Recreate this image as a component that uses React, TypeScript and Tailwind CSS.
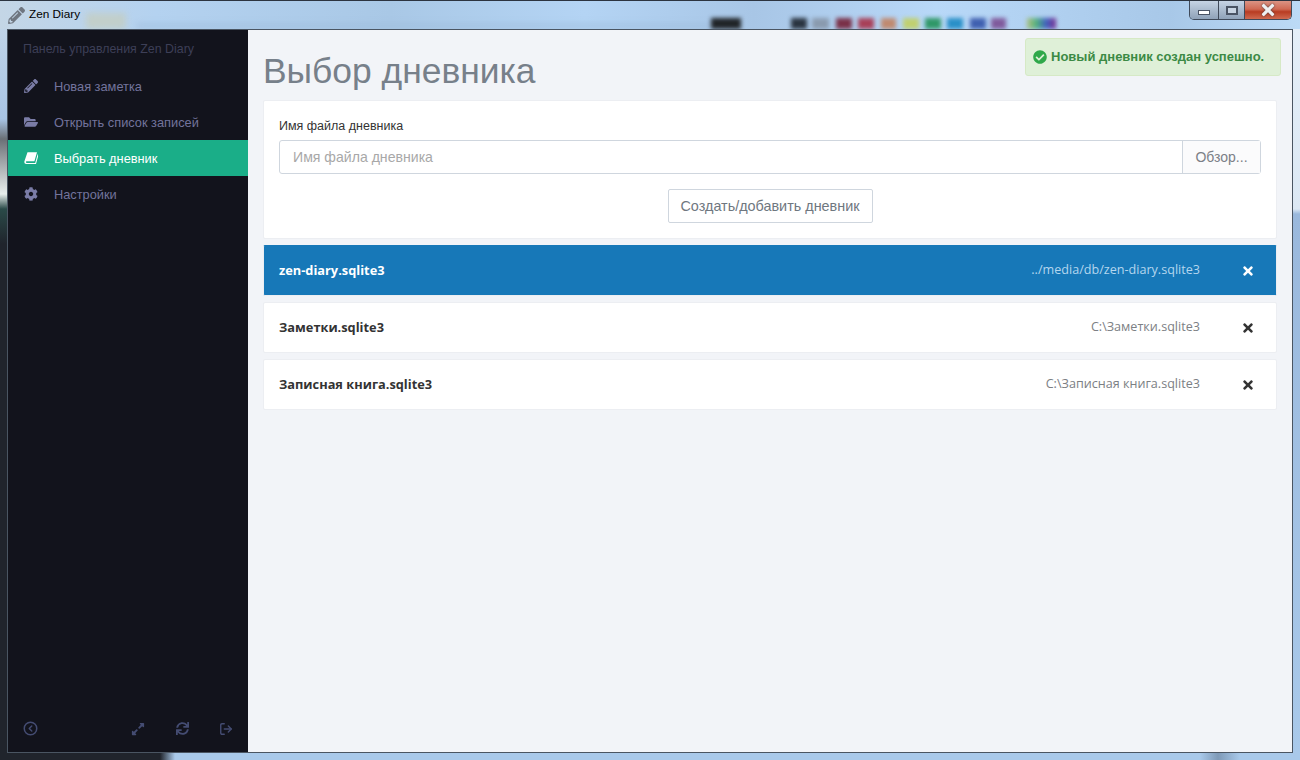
import React from 'react';
import { FaCheckCircle, FaCog, FaExpandAlt, FaFolderOpen, FaPencilAlt, FaSync, FaTimes } from 'react-icons/fa';
import { CircleChevronLeft, LogOut } from 'lucide-react';

const BookIcon = ({ className }: { className?: string }) => (
  <svg viewBox="0 0 14 13" fill="currentColor" className={className}>
    <path d="M3.5.8h9.5l-2.6 9H2.6c-1 0-1 1.6 0 1.6h8.6l2.4-8.6.9.5-2.5 9.2H2.4C.6 12.5 0 11 .5 9.5z" />
  </svg>
);

const navItems = [
  { label: 'Новая заметка', icon: FaPencilAlt },
  { label: 'Открыть список записей', icon: FaFolderOpen },
  { label: 'Выбрать дневник', icon: BookIcon, active: true },
  { label: 'Настройки', icon: FaCog },
];

const diaries = [
  { name: 'zen-diary.sqlite3', path: '../media/db/zen-diary.sqlite3', active: true },
  { name: 'Заметки.sqlite3', path: 'C:\\Заметки.sqlite3' },
  { name: 'Записная книга.sqlite3', path: 'C:\\Записная книга.sqlite3' },
];

const swatches = [
  'w-[16px] bg-[#2a3440]',
  'w-[17px] ml-[5px] bg-[#8a9aae]',
  'w-[16px] ml-[7px] bg-[#7a3048]',
  'w-[16px] ml-[6px] bg-[#a84058]',
  'w-[15px] ml-[7px] bg-[#c08a70]',
  'w-[16px] ml-[7px] bg-[#c0d070]',
  'w-[16px] ml-[6px] bg-[#309868]',
  'w-[16px] ml-[6px] bg-[#2a90c8]',
  'w-[16px] ml-[7px] bg-[#4060b0]',
  'w-[15px] ml-[5px] bg-[#805a9c]',
];

const TitleBar = () => (
  <div className="relative flex h-[29px] shrink-0 items-center border-t border-[#2c3440] bg-[linear-gradient(90deg,#c4d6e6_0%,#b4d2f0_12%,#a9c8e6_30%,#b4d4f4_45%,#a8c6e6_58%,#b8d8f8_72%,#a8c8e8_90%,#bcdaf6_100%)]">
    <FaPencilAlt className="ml-[8px] text-[17px] text-[#6f7680]" />
    <span className="ml-[4px] text-[11.8px] text-black font-['Liberation_Sans',sans-serif]">Zen Diary</span>
    <div className="ml-[6px] h-[16px] w-[40px] self-end bg-[#c8ccb4] opacity-60 blur-[3px]" />
    <div className="ml-[10px] h-[6px] w-[580px] self-end bg-[#9ab8d8] opacity-50 blur-[3px]" />
    <div className="ml-[-5px] flex h-[11px] self-end blur-[2px]">
      <div className="w-[30px] bg-[#202428]" />
      <div className="ml-[50px] flex">
        {swatches.map((swatch) => (
          <div key={swatch} className={swatch} />
        ))}
      </div>
      <div className="ml-[21px] w-[29px] bg-[linear-gradient(90deg,#b0c080,#50b080,#4060c0,#803090)]" />
    </div>
    <div className="absolute right-[8px] top-0 flex h-[19px] overflow-hidden rounded-b-[5px] border border-t-0 border-[#3f4a5a]">
      <div className="flex w-[28px] items-end justify-center bg-gradient-to-b from-[#c6d4e4] to-[#8fa2b8] pb-[4px]">
        <div className="h-[5px] w-[12px] border border-[#4a5464] bg-white" />
      </div>
      <div className="flex w-[27px] items-center justify-center border-x border-[#3f4a5a] bg-gradient-to-b from-[#c6d4e4] to-[#8fa2b8]">
        <div className="h-[9px] w-[12px] border-2 border-[#4a5464] bg-[#c8d4e2]" />
      </div>
      <div className="flex w-[46px] items-center justify-center bg-[linear-gradient(180deg,#dc9484_0%,#d06a54_45%,#b83c22_60%,#d06a50_100%)]">
        <FaTimes className="text-[18px] text-[#eef0f2] drop-shadow-[0_0_1px_#4a3a3a]" />
      </div>
    </div>
  </div>
);

const Sidebar = () => (
  <aside className="flex w-[240px] shrink-0 flex-col bg-[#12131c] font-['Liberation_Sans',sans-serif]">
    <div className="px-[15px] pt-[12px] pb-[11px] text-[12.4px] leading-[15px] text-[#3d3f57]">Панель управления Zen Diary</div>
    <nav className="flex flex-col">
      {navItems.map((item) => {
        const Icon = item.icon;
        return (
          <div
            key={item.label}
            className={`flex h-[36px] items-center text-[12.8px] ${item.active ? 'bg-[#1aae88] text-white' : 'text-[#73749c]'}`}
          >
            <span className="flex w-[46px] justify-center">
              <Icon className={`size-[14px] ${item.active ? 'text-white' : 'text-[#7a7ca6]'}`} />
            </span>
            <span className="pt-[1px]">{item.label}</span>
          </div>
        );
      })}
    </nav>
    <div className="mt-auto flex items-center pb-[16px] pl-[15px] pr-[15px] text-[#444c72]">
      <CircleChevronLeft size={15} strokeWidth={2.4} />
      <div className="ml-auto flex items-center gap-[30.5px]">
        <FaExpandAlt className="text-[14px]" />
        <FaSync className="text-[13px]" />
        <LogOut size={14} strokeWidth={2.4} />
      </div>
    </div>
  </aside>
);

const DiaryRow = ({ name, path, active }: { name: string; path: string; active?: boolean }) => (
  <div
    className={`flex h-[51px] items-center rounded-[2px] border border-[#eceef2] pl-[15px] pr-[21px] font-['Open_Sans',sans-serif] ${
      active ? 'border-t-[#1778b8] bg-[#1778b8] text-white' : 'bg-white text-[#333]'
    }`}
  >
    <span className="text-[12.8px] font-bold">{name}</span>
    <span className={`ml-auto text-[12.6px] ${active ? 'text-[#b4d6ee]' : 'text-[#7c8084]'}`}>{path}</span>
    <FaTimes className={`ml-[41px] text-[14px] ${active ? 'text-white' : 'text-[#333]'}`} />
  </div>
);

export default function App() {
  return (
    <div className="flex h-[760px] w-[1300px] flex-col overflow-hidden bg-[#a9c9ea]">
      <TitleBar />
      <div className="flex min-h-0 flex-1">
        <div className="w-[7px] shrink-0 bg-[linear-gradient(180deg,#c0d4e8_0px,#a8c4e4_90px,#6a7076_110px,#9a9ea2_130px,#e8eeec_165px,#2a4a48_180px,#20242c_215px,#20242c_100%)]" />
        <div className="relative flex min-w-0 flex-1 border border-[#4a5562] bg-[#f2f4f8]">
          <Sidebar />
          <main className="flex min-w-0 flex-1 flex-col pl-[15px] pr-[15px] font-['Liberation_Sans',sans-serif]">
            <h1 className="mt-[19px] text-[35.4px] leading-[44px] text-[#77808a]">Выбор дневника</h1>
            <section className="mt-[7px] flex flex-col rounded-[2px] border border-[#eceef2] bg-white px-[15px] pt-[16px]">
              <label className="text-[12.5px] leading-[18px] text-[#333]">Имя файла дневника</label>
              <div className="mt-[5px] flex h-[34px] rounded-[3px] border border-[#cfd6de]">
                <input
                  placeholder="Имя файла дневника"
                  className="min-w-0 flex-1 px-[13px] pt-[1px] text-[14.1px] outline-none placeholder:text-[#a8a8a8]"
                />
                <div className="flex w-[78px] items-center justify-center border-l border-[#cfd6de] bg-[#fbfbfc] pt-[1px] text-[14px] text-[#7b8087]">
                  Обзор...
                </div>
              </div>
              <div className="mt-[15px] mb-[15px] flex justify-center">
                <button className="h-[34px] w-[205px] rounded-[2px] border border-[#cfd6de] bg-white pt-[1px] text-[14.4px] text-[#6f7780]">
                  Создать/добавить дневник
                </button>
              </div>
            </section>
            <div className="mt-[6px] flex flex-col gap-[6px]">
              {diaries.map((diary) => (
                <DiaryRow key={diary.name} {...diary} />
              ))}
            </div>
          </main>
          <div className="absolute right-[11px] top-[8px] flex h-[38px] w-[256px] items-center rounded-[3px] border border-[#d6e9c6] bg-[#dff0d8] pl-[7px] text-[13px] font-bold text-[#3c8a45] font-['Liberation_Sans',sans-serif]">
            <FaCheckCircle className="text-[14px] text-[#2fa84a]" />
            <span className="ml-[4px]">Новый дневник создан успешно.</span>
          </div>
        </div>
        <div className="w-[7px] shrink-0 bg-[linear-gradient(180deg,#e4eef8_0px,#dce8f4_180px,#9ab8dc_185px,#a9c9ea_100%)]" />
      </div>
      <div className="h-[7px] shrink-0 bg-[linear-gradient(90deg,#20242c_0px,#20242c_160px,#a9c9ea_175px,#a9c9ea_1200px,#7f9ab8_1218px,#a9c9ea_1240px)]" />
    </div>
  );
}
